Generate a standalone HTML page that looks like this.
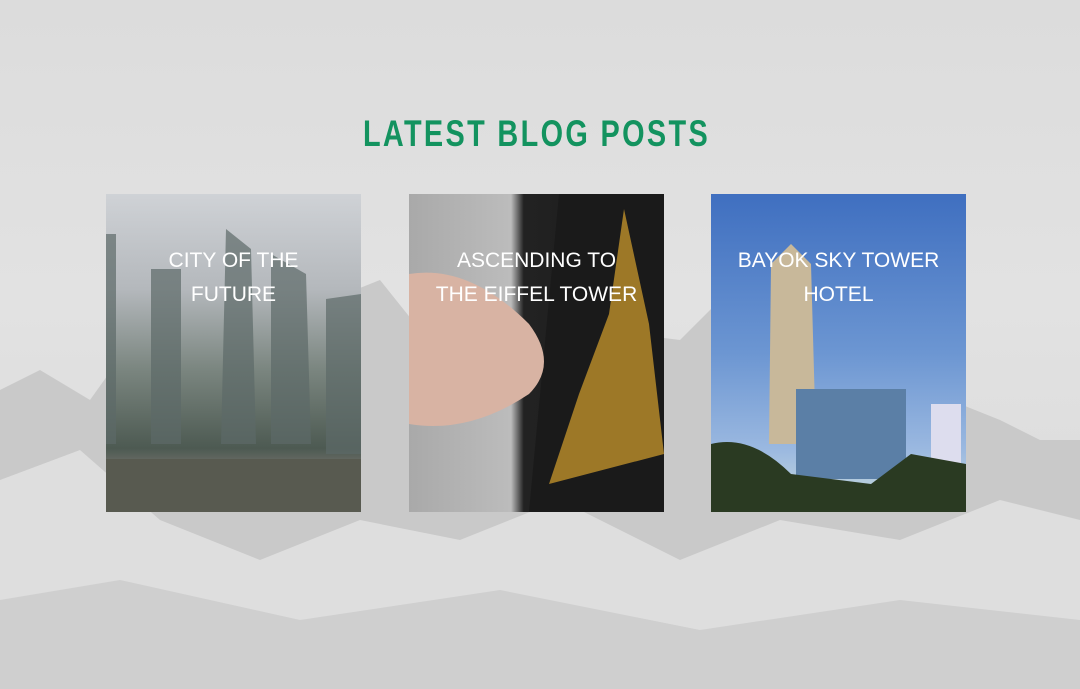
<!DOCTYPE html>
<html><head><style>
body{margin:0;width:1080px;height:689px;overflow:hidden;position:relative;font-family:"Liberation Sans",sans-serif;
background:linear-gradient(#dcdcdc 0,#e2e2e2 300px,#d8d8d8 689px);}
.mt{position:absolute;left:0;top:0;width:1080px;height:689px}
h1{position:absolute;left:-4px;width:1080px;top:112px;margin:0;text-align:center;color:#13935f;font-size:37px;font-weight:bold;letter-spacing:3px;line-height:44px;}
h1 span{display:inline-block;transform:scaleX(0.78);}
.c{position:absolute;top:194px;width:255px;height:318px;overflow:hidden}
.t{position:absolute;top:50px;left:0;right:0;text-align:center;color:#fff;font-size:21px;line-height:34px;white-space:nowrap}
</style></head><body>
<svg class="mt" viewBox="0 0 1080 689">
<path d="M0 390 L40 370 L90 400 L140 330 L200 300 L260 340 L330 300 L380 280 L420 330 L470 360 L540 300 L600 330 L680 340 L720 300 L800 340 L880 360 L950 400 L1000 420 L1040 440 L1080 440 L1080 689 L0 689Z" fill="#c9c9c9"/>
<path d="M0 480 L80 450 L160 520 L260 560 L360 520 L460 540 L560 500 L680 560 L780 520 L900 540 L1000 500 L1080 520 L1080 689 L0 689Z" fill="#dedede"/>
<path d="M0 600 L120 580 L300 620 L500 590 L700 630 L900 600 L1080 620 L1080 689 L0 689Z" fill="#cfcfcf"/>
</svg>
<h1><span>LATEST BLOG POSTS</span></h1>
<div class="c" style="left:106px;background:linear-gradient(#cfd2d6 0,#b4b8bc 30%,#7b8680 55%,#4d5a52 80%,#6a6c66 85%,#55564f 100%)">
<svg width="255" height="318" style="position:absolute;left:0;top:0"><path d="M0 40 L10 40 L10 250 L0 250Z M45 75 L75 75 L75 250 L45 250Z M120 35 L145 55 L150 250 L115 250Z M165 60 L200 80 L205 250 L165 250Z M220 105 L255 100 L255 260 L220 260Z" fill="#5d6a68" opacity=".7"/><rect y="265" width="255" height="53" fill="#585a50"/></svg>
<div class="t">CITY OF THE<br>FUTURE</div></div>
<div class="c" style="left:409px;background:linear-gradient(90deg,#a9a9a9 0,#bcbcbc 40%,#222 45%,#1b1b1b 100%)">
<svg width="255" height="318" style="position:absolute;left:0;top:0"><path d="M150 0 L255 0 L255 318 L120 318Z" fill="#1a1a1a"/><path d="M215 15 L240 130 L255 260 L140 290 L170 200 L200 120Z" fill="#b58a2a" opacity=".85"/><path d="M0 80 Q60 70 120 130 Q150 170 120 200 Q60 240 0 230Z" fill="#d8b3a3"/></svg>
<div class="t">ASCENDING TO<br>THE EIFFEL TOWER</div></div>
<div class="c" style="left:711px;background:linear-gradient(#3f6fc0 0,#6c96d2 50%,#9ab8e0 80%,#cdd 100%)">
<svg width="255" height="318" style="position:absolute;left:0;top:0"><path d="M60 70 L80 50 L100 70 L105 250 L58 250Z" fill="#c8b89a"/><rect x="85" y="195" width="110" height="90" fill="#5b7fa6"/><rect x="220" y="210" width="30" height="80" fill="#dde"/><path d="M0 250 Q40 240 80 280 L160 290 L200 260 L255 270 L255 318 L0 318Z" fill="#2a3a22"/></svg>
<div class="t">BAYOK SKY TOWER<br>HOTEL</div></div>
</body></html>
